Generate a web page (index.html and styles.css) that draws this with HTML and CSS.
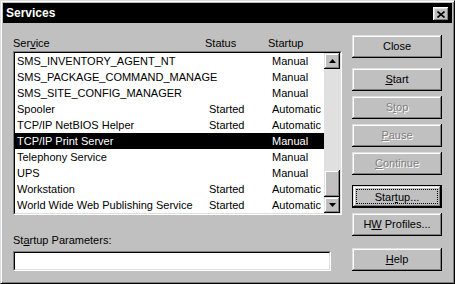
FILE: index.html
```html
<!DOCTYPE html>
<html>
<head>
  <title>Services</title>
  <link rel="stylesheet" href="styles.css">
</head>
<body>
  <div class="window">
    <div class="titlebar">
      <span class="title">Services</span>
      <span class="title-close">
        <svg width="8" height="7" viewBox="0 0 8 7"><path d="M0.5 0.5 L7.5 6.5 M7.5 0.5 L0.5 6.5" stroke="#000" stroke-width="1.6"/></svg>
      </span>
    </div>
    <div class="content">
      <div class="main">
        <div class="list-head">
          <span>Ser<u>v</u>ice</span>
          <span>Status</span>
          <span>Startup</span>
        </div>
        <div class="listbox">
          <div class="listbox-inner">
            <div class="rows">
              <div class="row"><span class="name">SMS_INVENTORY_AGENT_NT</span><span></span><span>Manual</span></div>
              <div class="row"><span class="name">SMS_PACKAGE_COMMAND_MANAGE</span><span></span><span>Manual</span></div>
              <div class="row"><span class="name">SMS_SITE_CONFIG_MANAGER</span><span></span><span>Manual</span></div>
              <div class="row"><span class="name">Spooler</span><span>Started</span><span>Automatic</span></div>
              <div class="row"><span class="name">TCP/IP NetBIOS Helper</span><span>Started</span><span>Automatic</span></div>
              <div class="row selected"><span class="name">TCP/IP Print Server</span><span></span><span>Manual</span></div>
              <div class="row"><span class="name">Telephony Service</span><span></span><span>Manual</span></div>
              <div class="row"><span class="name">UPS</span><span></span><span>Manual</span></div>
              <div class="row"><span class="name">Workstation</span><span>Started</span><span>Automatic</span></div>
              <div class="row"><span class="name">World Wide Web Publishing Service</span><span>Started</span><span>Automatic</span></div>
            </div>
            <div class="scrollbar">
              <div class="sb-btn">
                <svg width="7" height="4" viewBox="0 0 7 4"><path d="M3.5 0 L7 4 L0 4 Z" fill="#000"/></svg>
              </div>
              <div class="sb-track"><div class="sb-thumb"></div></div>
              <div class="sb-btn">
                <svg width="7" height="4" viewBox="0 0 7 4"><path d="M0 0 L7 0 L3.5 4 Z" fill="#000"/></svg>
              </div>
            </div>
          </div>
        </div>
        <div class="param-label">St<u>a</u>rtup Parameters:</div>
        <div class="param-input"><div class="param-input-inner"></div></div>
      </div>
      <div class="buttons">
        <div class="btn">Close</div>
        <div class="btn gap-big"><span><u>S</u>tart</span></div>
        <div class="btn disabled"><span>S<u>t</u>op</span></div>
        <div class="btn disabled"><span><u>P</u>ause</span></div>
        <div class="btn disabled"><span><u>C</u>ontinue</span></div>
        <div class="btn default gap-big"><span class="focus">Star<u>t</u>up...</span></div>
        <div class="btn"><span>H<u>W</u> Profiles...</span></div>
        <div class="btn gap-help"><span><u>H</u>elp</span></div>
      </div>
    </div>
  </div>
</body>
</html>
```

FILE: styles.css
```css
body {
  margin: 0;
  font-family: "Liberation Sans", Arial, sans-serif;
  font-size: 11px;
  color: #000;
  background: #c0c0c0;
}
.window {
  width: 455px;
  height: 284px;
  box-sizing: border-box;
  padding: 2px;
  border: 1px solid;
  border-color: #dfdfdf #000 #000 #dfdfdf;
  box-shadow: inset 1px 1px #fff, inset -1px -1px #808080;
  background: #c0c0c0;
}
.titlebar {
  height: 20px;
  background: #000;
  display: flex;
  align-items: center;
  justify-content: space-between;
}
.title {
  color: #fff;
  font-weight: bold;
  font-size: 12px;
  padding-left: 3px;
}
.title-close {
  width: 16px;
  height: 14px;
  margin: 2px 3px 0 0;
  box-sizing: border-box;
  background: #c0c0c0;
  display: flex;
  align-items: center;
  justify-content: center;
  box-shadow: inset -1px -1px #000, inset 1px 1px #fff, inset -2px -2px #808080, inset 2px 2px #dfdfdf;
}
.content {
  display: flex;
  padding: 12px 10px 0 10px;
  gap: 10px;
}
.main {
  width: 329px;
}
.list-head {
  display: grid;
  grid-template-columns: 192px 63px 1fr;
  height: 16px;
  line-height: 16px;
}
.listbox {
  border: 1px solid;
  border-color: #808080 #fff #fff #808080;
}
.listbox-inner {
  display: flex;
  border: 1px solid;
  border-color: #000 #dfdfdf #dfdfdf #000;
  background: #fff;
}
.rows {
  flex: 1;
}
.row {
  display: grid;
  grid-template-columns: 192px 63px 1fr;
  padding-left: 2px;
  height: 16px;
  line-height: 16px;
  white-space: nowrap;
}
.row.selected {
  background: #000;
  color: #fff;
}
.scrollbar {
  width: 16px;
  display: flex;
  flex-direction: column;
}
.sb-btn, .sb-thumb, .btn {
  background: #c0c0c0;
  box-shadow: inset -1px -1px #000, inset 1px 1px #dfdfdf, inset -2px -2px #808080, inset 2px 2px #fff;
}
.sb-btn {
  height: 16px;
  display: flex;
  align-items: center;
  justify-content: center;
}
.sb-track {
  height: 128px;
  background: #e0e0e0;
  display: flex;
  flex-direction: column;
  justify-content: flex-end;
}
.sb-thumb {
  height: 27px;
}
.param-label {
  margin-top: 17px;
  line-height: 16px;
}
.param-input {
  margin-top: 3px;
  width: 318px;
  box-sizing: border-box;
  border: 1px solid;
  border-color: #808080 #fff #fff #808080;
}
.param-input-inner {
  height: 16px;
  border: 1px solid;
  border-color: #000 #dfdfdf #dfdfdf #000;
  background: #fff;
}
.buttons {
  width: 90px;
  display: flex;
  flex-direction: column;
}
.btn {
  height: 23px;
  margin-top: 5px;
  box-sizing: border-box;
  display: flex;
  align-items: center;
  justify-content: center;
  padding-bottom: 1px;
}
.btn:first-child {
  margin-top: 0;
}
.btn.gap-big {
  margin-top: 10px;
}
.btn.gap-help {
  margin-top: 12px;
}
.btn.disabled {
  color: #808080;
  text-shadow: 1px 1px #fff;
}
.btn.default {
  border: 1px solid #000;
  padding: 3px;
  align-items: stretch;
}
.btn .focus {
  flex: 1;
  border: 1px dotted #000;
  display: flex;
  align-items: center;
  justify-content: center;
}
```
